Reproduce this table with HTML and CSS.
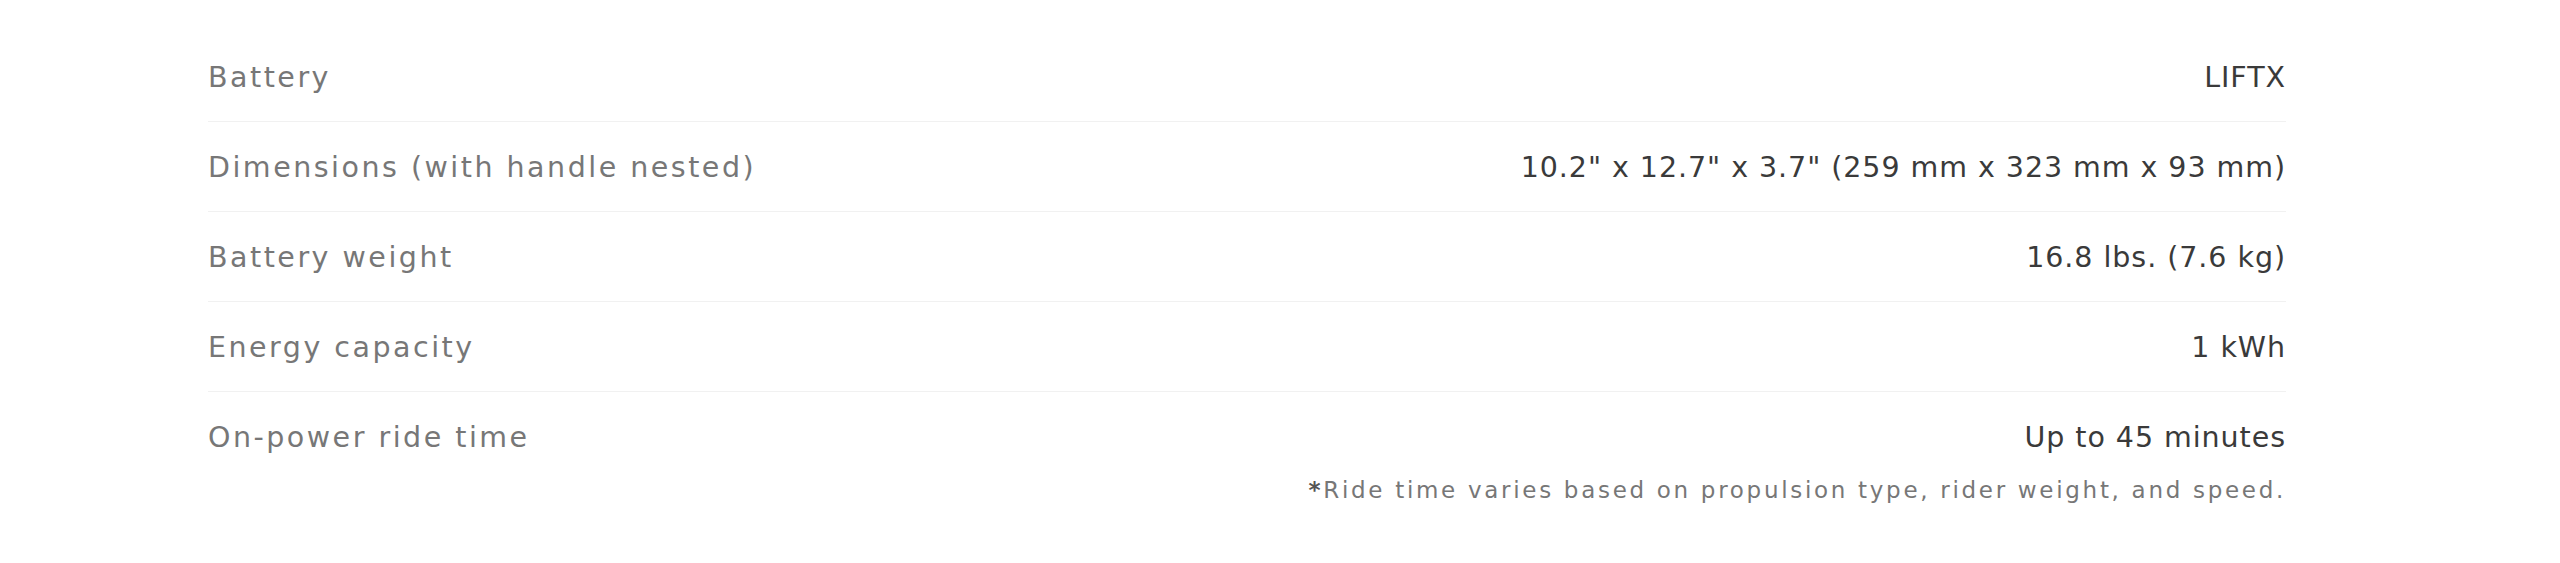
FILE: index.html
```html
<!DOCTYPE html>
<html lang="en">
<head>
    <meta charset="UTF-8">
    <meta name="viewport" content="width=device-width, initial-scale=1.0">
    <title>LIFTX Battery - Specs</title>
    <link rel="stylesheet" href="styles.css">
</head>
<body>
    <section class="specs">
        <div class="spec-row">
            <span class="spec-label">Battery</span>
            <span class="spec-value">LIFTX</span>
        </div>
        <div class="spec-row">
            <span class="spec-label">Dimensions (with handle nested)</span>
            <span class="spec-value">10.2" x 12.7" x 3.7" (259 mm x 323 mm x 93 mm)</span>
        </div>
        <div class="spec-row">
            <span class="spec-label">Battery weight</span>
            <span class="spec-value">16.8 lbs. (7.6 kg)</span>
        </div>
        <div class="spec-row">
            <span class="spec-label">Energy capacity</span>
            <span class="spec-value">1 kWh</span>
        </div>
        <div class="spec-row last">
            <span class="spec-label">On-power ride time</span>
            <span class="spec-value">Up to 45 minutes</span>
        </div>
        <p class="spec-note"><b>*</b>Ride time varies based on propulsion type, rider weight, and speed.</p>
    </section>
</body>
</html>
```

FILE: styles.css
```css
body {
    margin: 0;
    padding: 0;
    background: #fff;
    font-family: 'DejaVu Sans', 'Noto Sans', sans-serif;
}

.specs {
    width: 2078px;
    margin-left: 208px;
    padding-top: 32px;
}

.spec-row {
    display: flex;
    justify-content: space-between;
    align-items: center;
    height: 86px;
    padding-top: 3px;
    border-bottom: 1px solid #f1f1f1;
    font-size: 28.5px;
    line-height: 1.2;
}

.spec-row.last {
    border-bottom: none;
}

.spec-label {
    color: #777;
    letter-spacing: 2.5px;
}

.spec-value {
    color: #3a3a3a;
    letter-spacing: 0.95px;
}

.spec-note {
    margin: -4px 0 0;
    text-align: right;
    color: #777;
    font-size: 23px;
    line-height: 1.2;
    letter-spacing: 2.7px;
}

.spec-note b {
    color: #555;
}
```
